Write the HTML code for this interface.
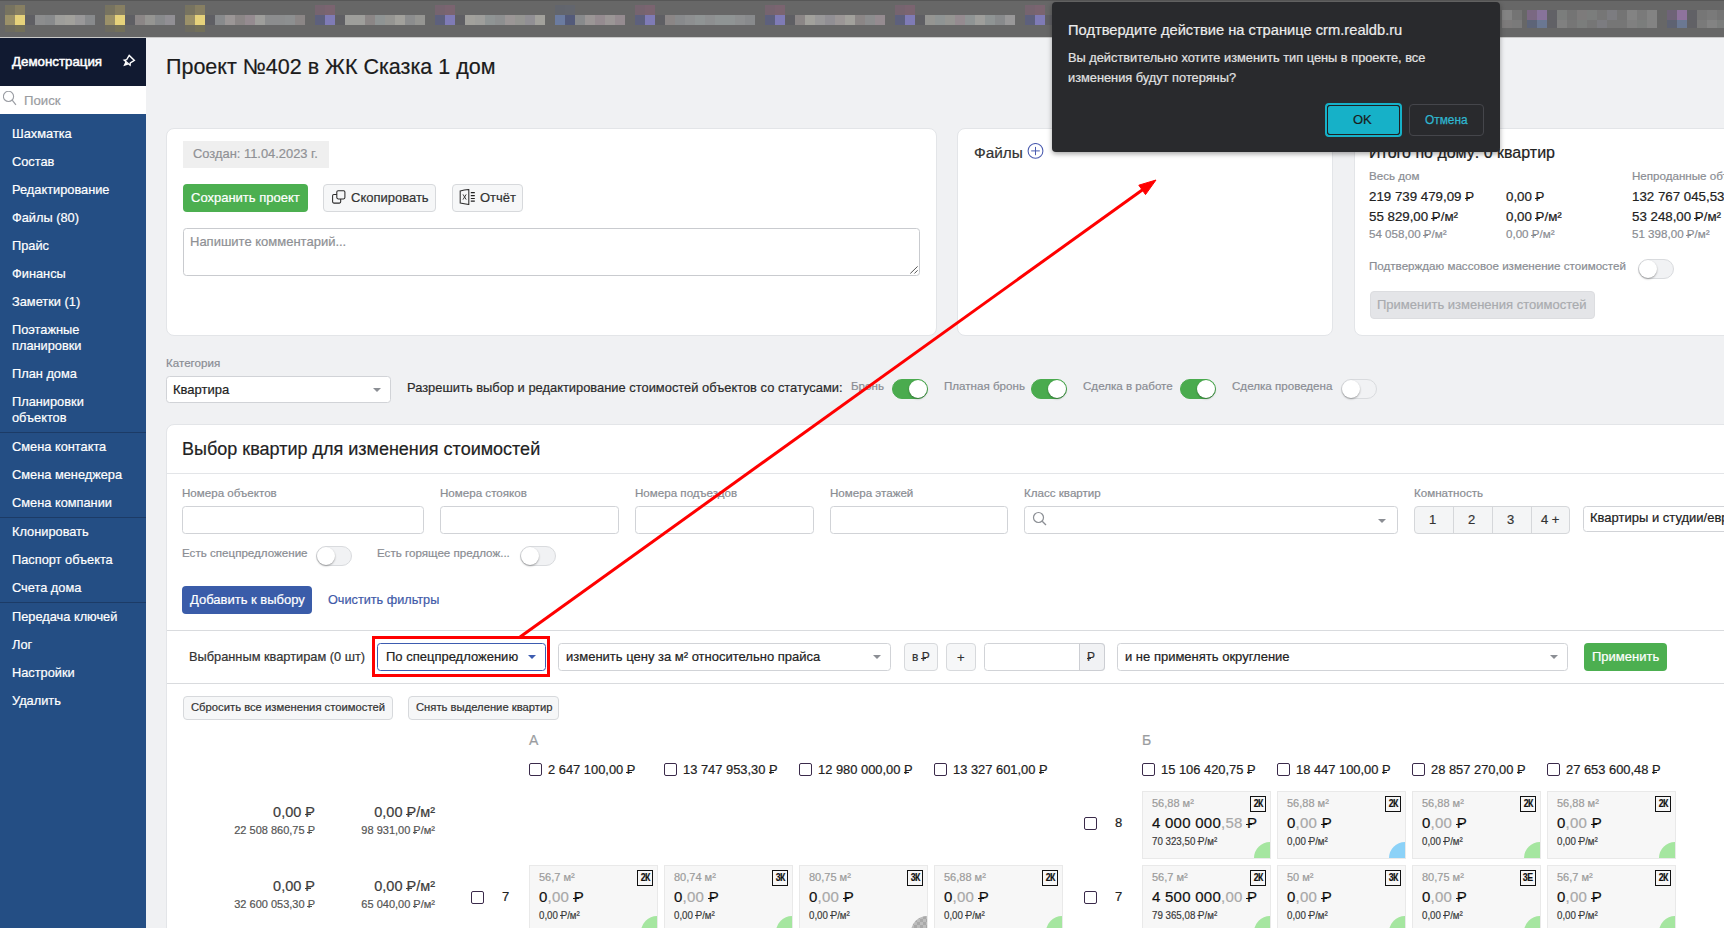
<!DOCTYPE html>
<html><head><meta charset="utf-8">
<style>
*{box-sizing:border-box;margin:0;padding:0}
html,body{width:1724px;height:928px;overflow:hidden;background:#f0f1f3;font-family:"Liberation Sans",sans-serif;color:#212121;position:relative;-webkit-text-stroke-width:0.2px}
.a{position:absolute;white-space:nowrap}
#topbar{position:absolute;left:0;top:0;width:1724px;height:38px;background:#676767;border-top:1px solid #575757;border-bottom:1px solid #c9c9c9;overflow:hidden}
#topbar i{position:absolute;display:block;height:10px}
#sb{position:absolute;left:0;top:38px;width:146px;height:890px;background:#244e84}
#sbh{position:absolute;left:0;top:0;width:146px;height:48px;background:#111a31;color:#fff;font-size:13.3px;-webkit-text-stroke-width:0.5px}
#sbs{position:absolute;left:0;top:48px;width:146px;height:28px;background:#fff}
.mi{position:absolute;left:12px;color:#fff;font-size:12.8px;line-height:16px;white-space:nowrap}
.sep{position:absolute;left:0;width:146px;height:1px;background:#1c3b66}
.card{position:absolute;background:#fff;border:1px solid #e3e5e8;border-radius:8px}
.lbl{position:absolute;font-size:11.6px;color:#8a8d93;white-space:nowrap}
.inp{position:absolute;background:#fff;border:1px solid #d1d3d7;border-radius:3.5px}
.tg{position:absolute;width:36px;height:20px;border-radius:10px;background:#f1f2f4;border:1px solid #d9dbde}
.tg:after{content:"";position:absolute;left:0;top:0;width:18px;height:18px;border-radius:50%;background:#fff;box-shadow:0 1px 2px rgba(0,0,0,.35)}
.tg.on{background:#4aab4e;border-color:#4aab4e}
.tg.on:after{left:16px}
.caret{position:absolute;width:0;height:0;border-left:4px solid transparent;border-right:4px solid transparent;border-top:4px solid #8b8e94}
.btn{position:absolute;border:1px solid #d7d9dc;background:#f6f7f8;border-radius:4px;font-size:13px;color:#333;white-space:nowrap}
.r{position:relative;display:inline-block;line-height:1}
.r:after{content:"";position:absolute;left:-0.04em;width:0.4em;top:0.6em;height:0.075em;background:currentColor}
.cb{position:absolute;width:13px;height:13px;border:1.3px solid #3a2a4a;border-radius:2px;background:#fff}
.fc{position:absolute;width:129px;height:68px;background:#f7f7f7;border:1px solid #e9e9e9;overflow:hidden}
.fc .ar{position:absolute;left:9px;top:4px;font-size:11px;line-height:14px;color:#9b9b9b;white-space:nowrap}
.fc .bd{position:absolute;left:107px;top:4px;width:16px;height:16px;border:1.5px solid #111;font-size:10px;line-height:13px;font-weight:bold;text-align:center;color:#111;letter-spacing:-0.5px}
.fc .bd span{display:inline-block;transform:scaleX(0.88)}
.fc .pr{position:absolute;left:9px;top:22px;font-size:15px;letter-spacing:0.25px;line-height:18px;color:#111;white-space:nowrap}
.fc .pr i{font-style:normal;color:#a8a8a8}
.fc .pm{position:absolute;left:9px;top:41.5px;font-size:11.6px;line-height:14px;color:#3a3a3a;white-space:nowrap;transform:scaleX(0.84);transform-origin:0 0}
.fc .q{position:absolute;right:-16px;bottom:-16px;width:32px;height:32px;border-radius:50%;background:#a5e6a0}
.fc .q.b{background:#8cd2f8}
.fc .q.g{background:repeating-conic-gradient(#bdbdbd 0 25%,#a9a9a9 0 50%) 0 0/6px 6px}
</style></head><body>
<div id="topbar"><i style="left:5px;top:4px;width:10px;height:10px;background:#777360"></i><i style="left:15px;top:4px;width:10px;height:10px;background:#877f62"></i><i style="left:5px;top:14px;width:10px;height:10px;background:#9b9169"></i><i style="left:15px;top:14px;width:10px;height:10px;background:#e6d27b"></i><i style="left:5px;top:24px;width:10px;height:7px;background:#6d6b5f"></i><i style="left:15px;top:24px;width:10px;height:7px;background:#737059"></i><i style="left:25px;top:14px;width:10px;height:10px;background:#5f5f64"></i><i style="left:105px;top:4px;width:10px;height:10px;background:#777360"></i><i style="left:115px;top:4px;width:10px;height:10px;background:#877f62"></i><i style="left:105px;top:14px;width:10px;height:10px;background:#9b9169"></i><i style="left:115px;top:14px;width:10px;height:10px;background:#e6d27b"></i><i style="left:105px;top:24px;width:10px;height:7px;background:#6d6b5f"></i><i style="left:115px;top:24px;width:10px;height:7px;background:#737059"></i><i style="left:125px;top:14px;width:10px;height:10px;background:#5f5f64"></i><i style="left:185px;top:4px;width:10px;height:10px;background:#777360"></i><i style="left:195px;top:4px;width:10px;height:10px;background:#877f62"></i><i style="left:185px;top:14px;width:10px;height:10px;background:#9b9169"></i><i style="left:195px;top:14px;width:10px;height:10px;background:#e6d27b"></i><i style="left:185px;top:24px;width:10px;height:7px;background:#6d6b5f"></i><i style="left:195px;top:24px;width:10px;height:7px;background:#737059"></i><i style="left:205px;top:14px;width:10px;height:10px;background:#5f5f64"></i><i style="left:315px;top:4px;width:10px;height:10px;background:#76646f"></i><i style="left:325px;top:4px;width:10px;height:10px;background:#7b6470"></i><i style="left:315px;top:14px;width:10px;height:10px;background:#5d607d"></i><i style="left:325px;top:14px;width:10px;height:10px;background:#7f7bb6"></i><i style="left:335px;top:14px;width:10px;height:10px;background:#5f5f64"></i><i style="left:435px;top:4px;width:10px;height:10px;background:#76646f"></i><i style="left:445px;top:4px;width:10px;height:10px;background:#7b6470"></i><i style="left:435px;top:14px;width:10px;height:10px;background:#5d607d"></i><i style="left:445px;top:14px;width:10px;height:10px;background:#7f7bb6"></i><i style="left:455px;top:14px;width:10px;height:10px;background:#5f5f64"></i><i style="left:635px;top:4px;width:10px;height:10px;background:#76646f"></i><i style="left:645px;top:4px;width:10px;height:10px;background:#7b6470"></i><i style="left:635px;top:14px;width:10px;height:10px;background:#5d607d"></i><i style="left:645px;top:14px;width:10px;height:10px;background:#7f7bb6"></i><i style="left:655px;top:14px;width:10px;height:10px;background:#5f5f64"></i><i style="left:765px;top:4px;width:10px;height:10px;background:#76646f"></i><i style="left:775px;top:4px;width:10px;height:10px;background:#7b6470"></i><i style="left:765px;top:14px;width:10px;height:10px;background:#5d607d"></i><i style="left:775px;top:14px;width:10px;height:10px;background:#7f7bb6"></i><i style="left:785px;top:14px;width:10px;height:10px;background:#5f5f64"></i><i style="left:895px;top:4px;width:10px;height:10px;background:#76646f"></i><i style="left:905px;top:4px;width:10px;height:10px;background:#7b6470"></i><i style="left:895px;top:14px;width:10px;height:10px;background:#5d607d"></i><i style="left:905px;top:14px;width:10px;height:10px;background:#7f7bb6"></i><i style="left:915px;top:14px;width:10px;height:10px;background:#5f5f64"></i><i style="left:1025px;top:4px;width:10px;height:10px;background:#76646f"></i><i style="left:1035px;top:4px;width:10px;height:10px;background:#7b6470"></i><i style="left:1025px;top:14px;width:10px;height:10px;background:#5d607d"></i><i style="left:1035px;top:14px;width:10px;height:10px;background:#7f7bb6"></i><i style="left:1045px;top:14px;width:10px;height:10px;background:#5f5f64"></i><i style="left:555px;top:4px;width:10px;height:10px;background:#62656d"></i><i style="left:565px;top:4px;width:10px;height:10px;background:#63666e"></i><i style="left:555px;top:14px;width:10px;height:10px;background:#6b7ba0"></i><i style="left:565px;top:14px;width:10px;height:10px;background:#535a7a"></i><i style="left:35px;top:14px;width:10px;height:10px;background:#8c8d8e"></i><i style="left:45px;top:14px;width:10px;height:10px;background:#888a8c"></i><i style="left:55px;top:14px;width:10px;height:10px;background:#9e9e9b"></i><i style="left:65px;top:14px;width:10px;height:10px;background:#a2a19c"></i><i style="left:75px;top:14px;width:10px;height:10px;background:#999899"></i><i style="left:85px;top:14px;width:10px;height:10px;background:#888a8c"></i><i style="left:135px;top:14px;width:10px;height:10px;background:#8b8686"></i><i style="left:145px;top:14px;width:10px;height:10px;background:#959592"></i><i style="left:155px;top:14px;width:10px;height:10px;background:#888a8c"></i><i style="left:165px;top:14px;width:10px;height:10px;background:#918f94"></i><i style="left:215px;top:14px;width:10px;height:10px;background:#888a8c"></i><i style="left:225px;top:14px;width:10px;height:10px;background:#9b9696"></i><i style="left:235px;top:14px;width:10px;height:10px;background:#8b8686"></i><i style="left:245px;top:14px;width:10px;height:10px;background:#958b90"></i><i style="left:255px;top:14px;width:10px;height:10px;background:#9e9e9b"></i><i style="left:265px;top:14px;width:10px;height:10px;background:#8c8d8e"></i><i style="left:275px;top:14px;width:10px;height:10px;background:#8c8d8e"></i><i style="left:285px;top:14px;width:10px;height:10px;background:#8d8f90"></i><i style="left:295px;top:14px;width:10px;height:10px;background:#8b8686"></i><i style="left:345px;top:14px;width:10px;height:10px;background:#9e9e9b"></i><i style="left:355px;top:14px;width:10px;height:10px;background:#9e9e9b"></i><i style="left:365px;top:14px;width:10px;height:10px;background:#8b8686"></i><i style="left:375px;top:14px;width:10px;height:10px;background:#8f9494"></i><i style="left:385px;top:14px;width:10px;height:10px;background:#959592"></i><i style="left:395px;top:14px;width:10px;height:10px;background:#a2a19c"></i><i style="left:405px;top:14px;width:10px;height:10px;background:#8c8d8e"></i><i style="left:415px;top:14px;width:10px;height:10px;background:#959592"></i><i style="left:465px;top:14px;width:10px;height:10px;background:#a2a19c"></i><i style="left:475px;top:14px;width:10px;height:10px;background:#9e9e9b"></i><i style="left:485px;top:14px;width:10px;height:10px;background:#8f9494"></i><i style="left:495px;top:14px;width:10px;height:10px;background:#8d8f90"></i><i style="left:505px;top:14px;width:10px;height:10px;background:#9b9696"></i><i style="left:515px;top:14px;width:10px;height:10px;background:#959592"></i><i style="left:525px;top:14px;width:10px;height:10px;background:#918f94"></i><i style="left:535px;top:14px;width:10px;height:10px;background:#a2a19c"></i><i style="left:575px;top:14px;width:10px;height:10px;background:#888a8c"></i><i style="left:585px;top:14px;width:10px;height:10px;background:#9b9696"></i><i style="left:595px;top:14px;width:10px;height:10px;background:#958b90"></i><i style="left:605px;top:14px;width:10px;height:10px;background:#9b9696"></i><i style="left:615px;top:14px;width:10px;height:10px;background:#958b90"></i><i style="left:665px;top:14px;width:10px;height:10px;background:#8b8686"></i><i style="left:675px;top:14px;width:10px;height:10px;background:#888a8c"></i><i style="left:685px;top:14px;width:10px;height:10px;background:#8d8f90"></i><i style="left:695px;top:14px;width:10px;height:10px;background:#8f9494"></i><i style="left:705px;top:14px;width:10px;height:10px;background:#8d8f90"></i><i style="left:715px;top:14px;width:10px;height:10px;background:#8f9494"></i><i style="left:725px;top:14px;width:10px;height:10px;background:#8f9494"></i><i style="left:735px;top:14px;width:10px;height:10px;background:#8d8f90"></i><i style="left:745px;top:14px;width:10px;height:10px;background:#888a8c"></i><i style="left:795px;top:14px;width:10px;height:10px;background:#8b8686"></i><i style="left:805px;top:14px;width:10px;height:10px;background:#a2a19c"></i><i style="left:815px;top:14px;width:10px;height:10px;background:#999899"></i><i style="left:825px;top:14px;width:10px;height:10px;background:#918f94"></i><i style="left:835px;top:14px;width:10px;height:10px;background:#9b9696"></i><i style="left:845px;top:14px;width:10px;height:10px;background:#a2a19c"></i><i style="left:855px;top:14px;width:10px;height:10px;background:#8b8686"></i><i style="left:865px;top:14px;width:10px;height:10px;background:#8c8d8e"></i><i style="left:875px;top:14px;width:10px;height:10px;background:#958b90"></i><i style="left:925px;top:14px;width:10px;height:10px;background:#959592"></i><i style="left:935px;top:14px;width:10px;height:10px;background:#8f9494"></i><i style="left:945px;top:14px;width:10px;height:10px;background:#959592"></i><i style="left:955px;top:14px;width:10px;height:10px;background:#958b90"></i><i style="left:965px;top:14px;width:10px;height:10px;background:#8f9494"></i><i style="left:975px;top:14px;width:10px;height:10px;background:#9e9e9b"></i><i style="left:985px;top:14px;width:10px;height:10px;background:#8f9494"></i><i style="left:995px;top:14px;width:10px;height:10px;background:#888a8c"></i><i style="left:1005px;top:14px;width:10px;height:10px;background:#999899"></i><i style="left:1502px;top:9px;width:10px;height:10px;background:#838383"></i><i style="left:1502px;top:19px;width:10px;height:8px;background:#7d7b7b"></i><i style="left:1512px;top:9px;width:10px;height:10px;background:#747474"></i><i style="left:1512px;top:19px;width:10px;height:8px;background:#7a7a7a"></i><i style="left:1527px;top:9px;width:10px;height:10px;background:#7a6882"></i><i style="left:1537px;top:9px;width:10px;height:10px;background:#87739b"></i><i style="left:1527px;top:19px;width:10px;height:8px;background:#5d6478"></i><i style="left:1537px;top:19px;width:10px;height:8px;background:#6a7792"></i><i style="left:1547px;top:9px;width:10px;height:18px;background:#616166"></i><i style="left:1557px;top:9px;width:10px;height:10px;background:#7b7d7c"></i><i style="left:1557px;top:19px;width:10px;height:8px;background:#808080"></i><i style="left:1567px;top:9px;width:10px;height:10px;background:#747474"></i><i style="left:1567px;top:19px;width:10px;height:8px;background:#767676"></i><i style="left:1577px;top:9px;width:10px;height:10px;background:#7d7b7b"></i><i style="left:1577px;top:19px;width:10px;height:8px;background:#7b7d7c"></i><i style="left:1587px;top:9px;width:10px;height:10px;background:#7b7d7c"></i><i style="left:1587px;top:19px;width:10px;height:8px;background:#767676"></i><i style="left:1597px;top:9px;width:10px;height:10px;background:#767676"></i><i style="left:1597px;top:19px;width:10px;height:8px;background:#7c7c80"></i><i style="left:1607px;top:9px;width:10px;height:10px;background:#7c7c80"></i><i style="left:1607px;top:19px;width:10px;height:8px;background:#767676"></i><i style="left:1617px;top:9px;width:10px;height:10px;background:#747474"></i><i style="left:1617px;top:19px;width:10px;height:8px;background:#767676"></i><i style="left:1627px;top:9px;width:10px;height:10px;background:#838383"></i><i style="left:1627px;top:19px;width:10px;height:8px;background:#808080"></i><i style="left:1637px;top:9px;width:10px;height:10px;background:#7a7a7a"></i><i style="left:1637px;top:19px;width:10px;height:8px;background:#7b7d7c"></i><i style="left:1647px;top:9px;width:10px;height:10px;background:#838383"></i><i style="left:1647px;top:19px;width:10px;height:8px;background:#838383"></i><i style="left:1667px;top:9px;width:10px;height:10px;background:#6e6377"></i><i style="left:1677px;top:9px;width:10px;height:10px;background:#8e739d"></i><i style="left:1667px;top:19px;width:10px;height:8px;background:#5e6272"></i><i style="left:1677px;top:19px;width:10px;height:8px;background:#6b7893"></i><i style="left:1687px;top:9px;width:10px;height:18px;background:#616166"></i><i style="left:1697px;top:9px;width:10px;height:10px;background:#767676"></i><i style="left:1697px;top:19px;width:10px;height:8px;background:#7a7a7a"></i><i style="left:1707px;top:9px;width:10px;height:10px;background:#7a7a7a"></i><i style="left:1707px;top:19px;width:10px;height:8px;background:#838383"></i><i style="left:1717px;top:9px;width:10px;height:10px;background:#747474"></i><i style="left:1717px;top:19px;width:10px;height:8px;background:#7b7d7c"></i></div>

<div id="sb">
  <div id="sbh"><div class="a" style="left:12px;top:16px;line-height:16px">Демонстрация</div>
    <svg class="a" style="left:118px;top:12px" width="22" height="22" viewBox="0 0 22 22"><path d="M6.2 10.1 L8.7 9.7 L11.2 5.4 L16.4 10.4 L12.3 12.9 L12.1 15.2 Z" fill="none" stroke="#fff" stroke-width="1.35" stroke-linejoin="miter"/><path d="M7.4 11.6 L10.6 14.4 L5.3 16.3 Z" fill="#fff"/></svg>
  </div>
  <div id="sbs">
    <svg class="a" style="left:3px;top:5px" width="16" height="16" viewBox="0 0 16 16"><circle cx="5.5" cy="5.4" r="5.1" fill="none" stroke="#9a9da3" stroke-width="1.1"/><path d="M9.2 9.1 L12.9 13.8" stroke="#9a9da3" stroke-width="1.2"/></svg>
    <div class="a" style="left:24px;top:7px;font-size:13.2px;line-height:16px;color:#9a9ca1">Поиск</div>
  </div>
  <div class="mi" style="top:88px">Шахматка</div>
  <div class="mi" style="top:116px">Состав</div>
  <div class="mi" style="top:144px">Редактирование</div>
  <div class="mi" style="top:172px">Файлы (80)</div>
  <div class="mi" style="top:200px">Прайс</div>
  <div class="mi" style="top:228px">Финансы</div>
  <div class="mi" style="top:256px">Заметки (1)</div>
  <div class="mi" style="top:284px">Поэтажные<br>планировки</div>
  <div class="mi" style="top:328px">План дома</div>
  <div class="mi" style="top:356px">Планировки<br>объектов</div>
  <div class="mi" style="top:401px">Смена контакта</div>
  <div class="mi" style="top:429px">Смена менеджера</div>
  <div class="mi" style="top:457px">Смена компании</div>
  <div class="mi" style="top:486px">Клонировать</div>
  <div class="mi" style="top:514px">Паспорт объекта</div>
  <div class="mi" style="top:542px">Счета дома</div>
  <div class="mi" style="top:571px">Передача ключей</div>
  <div class="mi" style="top:599px">Лог</div>
  <div class="mi" style="top:627px">Настройки</div>
  <div class="mi" style="top:655px">Удалить</div>
  <div class="sep" style="top:394px"></div>
  <div class="sep" style="top:479px"></div>
  <div class="sep" style="top:564px"></div>
</div>


<div id="title" class="a" style="left:166px;top:54px;font-size:21.5px;line-height:26px;color:#1b1b1b">Проект №402 в ЖК Сказка 1 дом</div>

<!-- card 1 -->
<div class="card" style="left:166px;top:128px;width:771px;height:208px"></div>
<div class="a" style="left:183px;top:141px;width:146px;height:27px;background:#efefef"></div>
<div id="created" class="a" style="left:193px;top:146px;font-size:12.9px;line-height:16px;color:#8f9195">Создан: 11.04.2023 г.</div>
<div class="a" style="left:183px;top:184px;width:125px;height:28px;background:#4caf50;border-radius:4px"></div>
<div id="save" class="a" style="left:191px;top:190px;font-size:13px;line-height:16px;color:#fff">Сохранить проект</div>
<div class="btn" style="left:323px;top:184px;width:113px;height:28px"></div>
<svg class="a" style="left:326px;top:186px" width="24" height="24" viewBox="0 0 24 24"><rect x="10.8" y="4.8" width="8.1" height="8.1" rx="1.3" fill="none" stroke="#2a2a2a" stroke-width="1.05"/><path d="M10.8 8.5 H7.9 Q6.6 8.5 6.6 9.8 V15.8 Q6.6 17.1 7.9 17.1 H13.4 Q14.7 17.1 14.7 15.8 V12.9" fill="none" stroke="#2a2a2a" stroke-width="1.05"/></svg>
<div id="copy" class="a" style="left:351px;top:190px;font-size:13px;line-height:16px;color:#333">Скопировать</div>
<div class="btn" style="left:452px;top:184px;width:71px;height:28px"></div>
<svg class="a" style="left:454px;top:184px" width="24" height="24" viewBox="0 0 24 24"><path d="M6.2 6.9 Q10 5.9 14.8 5.6 V20.4 Q10 20.1 6.2 19.1 Z" fill="none" stroke="#2a2a2a" stroke-width="1.05"/><path d="M9 10.4 L12.2 15.6 M12.2 10.4 L9 15.6" stroke="#333" stroke-width="0.95"/><path d="M16.8 8.6 H20.8 M16.8 11.6 H20.8 M16.8 14.5 H20.8 M16.8 17.2 H20.8" stroke="#222" stroke-width="1.2"/></svg>
<div id="rep" class="a" style="left:480px;top:190px;font-size:13px;line-height:16px;color:#333">Отчёт</div>
<div class="inp" style="left:183px;top:228px;width:737px;height:48px;border-color:#c9cbcf"></div>
<div id="comment" class="a" style="left:190px;top:234px;font-size:13px;line-height:16px;color:#8e9094">Напишите комментарий...</div>
<svg class="a" style="left:909px;top:264px" width="10" height="11" viewBox="0 0 10 11"><path d="M1.3 9.5 L8.6 2.4 M5.4 9.5 L8.6 6.3" stroke="#555" stroke-width="1"/></svg>

<!-- card 2 -->
<div class="card" style="left:957px;top:128px;width:376px;height:208px"></div>
<div id="files" class="a" style="left:974px;top:144px;font-size:15.4px;line-height:18px;color:#333">Файлы</div>
<svg class="a" style="left:1027px;top:143px" width="17" height="17" viewBox="0 0 17 17"><circle cx="8.5" cy="7.9" r="7.4" fill="none" stroke="#4b5cb0" stroke-width="1.05"/><path d="M8.5 3.9 V12.2 M4.2 7.9 H12.8" stroke="#4b5cb0" stroke-width="1"/></svg>

<!-- card 3 -->
<div class="card" style="left:1354px;top:128px;width:400px;height:208px"></div>
<div id="itogo" class="a" style="left:1369px;top:144px;font-size:16px;line-height:18px;color:#222">Итого по дому: 0 квартир</div>
<div class="lbl" style="left:1369px;top:169px;line-height:14px">Весь дом</div>
<div class="lbl" style="left:1632px;top:169px;line-height:14px">Непроданные объекты</div>
<div id="v1" class="a" style="left:1369px;top:189px;font-size:13.3px;line-height:16px">219 739 479,09 <span class="r">Р</span></div>
<div class="a" style="left:1506px;top:189px;font-size:13.3px;line-height:16px">0,00 <span class="r">Р</span></div>
<div class="a" style="left:1632px;top:189px;font-size:13.3px;line-height:16px">132 767 045,53 <span class="r">Р</span></div>
<div class="a" style="left:1369px;top:209px;font-size:13.3px;line-height:16px">55 829,00 <span class="r">Р</span>/м²</div>
<div class="a" style="left:1506px;top:209px;font-size:13.3px;line-height:16px">0,00 <span class="r">Р</span>/м²</div>
<div class="a" style="left:1632px;top:209px;font-size:13.3px;line-height:16px">53 248,00 <span class="r">Р</span>/м²</div>
<div class="lbl" style="left:1369px;top:227px;line-height:14px">54 058,00 <span class="r">Р</span>/м²</div>
<div class="lbl" style="left:1506px;top:227px;line-height:14px">0,00 <span class="r">Р</span>/м²</div>
<div class="lbl" style="left:1632px;top:227px;line-height:14px">51 398,00 <span class="r">Р</span>/м²</div>
<div id="confirm" class="lbl" style="left:1369px;top:259px;line-height:14px">Подтверждаю массовое изменение стоимостей</div>
<div class="tg" style="left:1638px;top:259px"></div>
<div class="a" style="left:1370px;top:291px;width:225px;height:28px;background:#e4e5e8;border:1px solid #dcdde0;border-radius:4px"></div>
<div id="applyall" class="a" style="left:1377px;top:297px;font-size:13px;line-height:16px;color:#a9abaf">Применить изменения стоимостей</div>

<!-- category row -->
<div class="lbl" style="left:166px;top:356px;line-height:14px">Категория</div>
<div class="inp" style="left:166px;top:376px;width:225px;height:27px"></div>
<div id="kv" class="a" style="left:173px;top:382px;font-size:13px;line-height:16px;color:#222">Квартира</div>
<div class="caret" style="left:373px;top:388px"></div>
<div id="razr" class="a" style="left:407px;top:380px;font-size:12.9px;line-height:16px;color:#2b2b2b">Разрешить выбор и редактирование стоимостей объектов со статусами:</div>
<div class="lbl" style="left:851px;top:379px;line-height:14px">Бронь</div>
<div class="tg on" style="left:892px;top:379px"></div>
<div class="lbl" style="left:944px;top:379px;line-height:14px">Платная бронь</div>
<div class="tg on" style="left:1031px;top:379px"></div>
<div class="lbl" style="left:1083px;top:379px;line-height:14px">Сделка в работе</div>
<div class="tg on" style="left:1180px;top:379px"></div>
<div class="lbl" style="left:1232px;top:379px;line-height:14px">Сделка проведена</div>
<div class="tg" style="left:1341px;top:379px"></div>

<!-- selection card -->
<div class="card" style="left:166px;top:424px;width:1600px;height:600px"></div>
<div id="vybor" class="a" style="left:182px;top:439px;font-size:18px;line-height:20px;color:#222">Выбор квартир для изменения стоимостей</div>
<div class="a" style="left:167px;top:473px;width:1557px;height:1px;background:#e3e5e8"></div>
<div class="lbl" style="left:182px;top:486px;line-height:14px">Номера объектов</div>
<div class="lbl" style="left:440px;top:486px;line-height:14px">Номера стояков</div>
<div class="lbl" style="left:635px;top:486px;line-height:14px">Номера подъездов</div>
<div class="lbl" style="left:830px;top:486px;line-height:14px">Номера этажей</div>
<div class="lbl" style="left:1024px;top:486px;line-height:14px">Класс квартир</div>
<div class="lbl" style="left:1414px;top:486px;line-height:14px">Комнатность</div>
<div class="inp" style="left:182px;top:506px;width:242px;height:28px"></div>
<div class="inp" style="left:440px;top:506px;width:179px;height:28px"></div>
<div class="inp" style="left:635px;top:506px;width:179px;height:28px"></div>
<div class="inp" style="left:830px;top:506px;width:178px;height:28px"></div>
<div class="inp" style="left:1024px;top:506px;width:374px;height:28px"></div>
<svg class="a" style="left:1032px;top:511px" width="16" height="16" viewBox="0 0 16 16"><circle cx="6.5" cy="6.5" r="5" fill="none" stroke="#8b8e94" stroke-width="1.2"/><path d="M10.2 10.2 L14 14" stroke="#8b8e94" stroke-width="1.3"/></svg>
<div class="caret" style="left:1378px;top:519px"></div>
<div class="a" style="left:1414px;top:506px;width:156px;height:28px;border:1px solid #d5d7da;border-radius:4px;background:#f4f5f6"></div>
<div class="a" style="left:1453px;top:507px;width:1px;height:26px;background:#d5d7da"></div>
<div class="a" style="left:1492px;top:507px;width:1px;height:26px;background:#d5d7da"></div>
<div class="a" style="left:1531px;top:507px;width:1px;height:26px;background:#d5d7da"></div>
<div class="a" style="left:1429px;top:512px;font-size:13px;line-height:16px;color:#333">1</div>
<div class="a" style="left:1468px;top:512px;font-size:13px;line-height:16px;color:#333">2</div>
<div class="a" style="left:1507px;top:512px;font-size:13px;line-height:16px;color:#333">3</div>
<div class="a" style="left:1541px;top:512px;font-size:13px;line-height:16px;color:#333">4 +</div>
<div class="inp" style="left:1583px;top:506px;width:200px;height:26px"></div>
<div class="a" style="left:1590px;top:510px;font-size:13px;line-height:16px;color:#222">Квартиры и студии/евро</div>
<div class="lbl" style="left:182px;top:546px;line-height:14px">Есть спецпредложение</div>
<div class="tg" style="left:316px;top:546px"></div>
<div class="lbl" style="left:377px;top:546px;line-height:14px">Есть горящее предлож...</div>
<div class="tg" style="left:520px;top:546px"></div>
<div class="a" style="left:182px;top:586px;width:130px;height:28px;background:#3a5ca9;border-radius:4px"></div>
<div id="add" class="a" style="left:190px;top:592px;font-size:13px;line-height:16px;color:#fff">Добавить к выбору</div>
<div id="clear" class="a" style="left:328px;top:592px;font-size:12.7px;line-height:16px;color:#3f5aa8">Очистить фильтры</div>

<!-- action bar -->
<div class="a" style="left:167px;top:630px;width:1557px;height:1px;background:#d9dbde"></div>
<div id="vybr" class="a" style="left:189px;top:649px;font-size:12.8px;line-height:16px;color:#333">Выбранным квартирам (0 шт)</div>
<div class="inp" style="left:377px;top:643px;width:169px;height:28px;border-color:#3d5cb0"></div>
<div id="spec" class="a" style="left:386px;top:649px;font-size:13px;line-height:16px;color:#222">По спецпредложению</div>
<div class="caret" style="left:528px;top:655px;border-top-color:#3d5cb0"></div>
<div class="inp" style="left:558px;top:643px;width:333px;height:28px"></div>
<div id="izm" class="a" style="left:566px;top:649px;font-size:13px;line-height:16px;color:#222">изменить цену за м² относительно прайса</div>
<div class="caret" style="left:873px;top:655px"></div>
<div class="btn" style="left:904px;top:643px;width:34px;height:28px"></div>
<div class="a" style="left:912px;top:649px;font-size:12px;line-height:16px;color:#333">в <span class="r">Р</span></div>
<div class="btn" style="left:946px;top:643px;width:30px;height:28px"></div>
<div class="a" style="left:957px;top:650px;font-size:13px;line-height:16px;color:#333">+</div>
<div class="inp" style="left:984px;top:643px;width:121px;height:28px"></div>
<div class="a" style="left:1079px;top:643px;width:26px;height:28px;background:#f1f2f4;border:1px solid #ccced3;border-radius:0 4px 4px 0"></div>
<div class="a" style="left:1087px;top:649px;font-size:12px;line-height:16px;color:#333"><span class="r">Р</span></div>
<div class="inp" style="left:1117px;top:643px;width:451px;height:28px"></div>
<div id="okr" class="a" style="left:1125px;top:649px;font-size:13px;line-height:16px;color:#222">и не применять округление</div>
<div class="caret" style="left:1550px;top:655px"></div>
<div class="a" style="left:1584px;top:643px;width:83px;height:28px;background:#4caf50;border-radius:4px"></div>
<div id="apply" class="a" style="left:1592px;top:649px;font-size:13px;line-height:16px;color:#fff">Применить</div>
<div class="a" style="left:167px;top:683px;width:1557px;height:1px;background:#d9dbde"></div>
<div class="btn" style="left:183px;top:696px;width:210px;height:24px"></div>
<div id="sbros" class="a" style="left:191px;top:700px;font-size:11.25px;line-height:14px;color:#333">Сбросить все изменения стоимостей</div>
<div class="btn" style="left:408px;top:696px;width:151px;height:24px"></div>
<div id="snyat" class="a" style="left:416px;top:700px;font-size:11.25px;line-height:14px;color:#333">Снять выделение квартир</div>

<!-- chess -->
<div class="a" style="left:529px;top:731px;font-size:14px;line-height:18px;color:#9a9ca0">А</div>
<div class="a" style="left:1142px;top:731px;font-size:14px;line-height:18px;color:#9a9ca0">Б</div>
<div class="cb" style="left:529px;top:763px"></div><div class="a" style="left:548px;top:762px;font-size:12.9px;line-height:16px;color:#222">2 647 100,00 <span class="r">Р</span></div>
<div class="cb" style="left:664px;top:763px"></div><div class="a" style="left:683px;top:762px;font-size:12.9px;line-height:16px;color:#222">13 747 953,30 <span class="r">Р</span></div>
<div class="cb" style="left:799px;top:763px"></div><div class="a" style="left:818px;top:762px;font-size:12.9px;line-height:16px;color:#222">12 980 000,00 <span class="r">Р</span></div>
<div class="cb" style="left:934px;top:763px"></div><div class="a" style="left:953px;top:762px;font-size:12.9px;line-height:16px;color:#222">13 327 601,00 <span class="r">Р</span></div>
<div class="cb" style="left:1142px;top:763px"></div><div class="a" style="left:1161px;top:762px;font-size:12.9px;line-height:16px;color:#222">15 106 420,75 <span class="r">Р</span></div>
<div class="cb" style="left:1277px;top:763px"></div><div class="a" style="left:1296px;top:762px;font-size:12.9px;line-height:16px;color:#222">18 447 100,00 <span class="r">Р</span></div>
<div class="cb" style="left:1412px;top:763px"></div><div class="a" style="left:1431px;top:762px;font-size:12.9px;line-height:16px;color:#222">28 857 270,00 <span class="r">Р</span></div>
<div class="cb" style="left:1547px;top:763px"></div><div class="a" style="left:1566px;top:762px;font-size:12.9px;line-height:16px;color:#222">27 653 600,48 <span class="r">Р</span></div>
<div class="a" style="right:1409px;top:803px;font-size:14.5px;line-height:18px;color:#3d3d3d">0,00 <span class="r">Р</span></div>
<div class="a" style="right:1409px;top:823px;font-size:11px;line-height:14px;color:#555">22 508 860,75 <span class="r">Р</span></div>
<div class="a" style="right:1409px;top:877px;font-size:14.5px;line-height:18px;color:#3d3d3d">0,00 <span class="r">Р</span></div>
<div class="a" style="right:1409px;top:897px;font-size:11px;line-height:14px;color:#555">32 600 053,30 <span class="r">Р</span></div>
<div class="a" style="right:1289px;top:803px;font-size:14.5px;line-height:18px;color:#3d3d3d">0,00 <span class="r">Р</span>/м²</div>
<div class="a" style="right:1289px;top:823px;font-size:11px;line-height:14px;color:#555">98 931,00 <span class="r">Р</span>/м²</div>
<div class="a" style="right:1289px;top:877px;font-size:14.5px;line-height:18px;color:#3d3d3d">0,00 <span class="r">Р</span>/м²</div>
<div class="a" style="right:1289px;top:897px;font-size:11px;line-height:14px;color:#555">65 040,00 <span class="r">Р</span>/м²</div>
<div class="cb" style="left:471px;top:891px"></div><div class="a" style="left:502px;top:889px;font-size:13px;line-height:16px;color:#222">7</div>
<div class="cb" style="left:1084px;top:817px"></div><div class="a" style="left:1115px;top:815px;font-size:13px;line-height:16px;color:#222">8</div>
<div class="cb" style="left:1084px;top:891px"></div><div class="a" style="left:1115px;top:889px;font-size:13px;line-height:16px;color:#222">7</div>
<div class="fc" style="left:529px;top:865px"><div class="ar">56,7 м²</div><div class="bd"><span>2К</span></div><div class="pr">0<i>,00</i> <span class="r">Р</span></div><div class="pm">0,00 <span class="r">Р</span>/м²</div><div class="q "></div></div>
<div class="fc" style="left:664px;top:865px"><div class="ar">80,74 м²</div><div class="bd"><span>3К</span></div><div class="pr">0<i>,00</i> <span class="r">Р</span></div><div class="pm">0,00 <span class="r">Р</span>/м²</div><div class="q "></div></div>
<div class="fc" style="left:799px;top:865px"><div class="ar">80,75 м²</div><div class="bd"><span>3К</span></div><div class="pr">0<i>,00</i> <span class="r">Р</span></div><div class="pm">0,00 <span class="r">Р</span>/м²</div><div class="q g"></div></div>
<div class="fc" style="left:934px;top:865px"><div class="ar">56,88 м²</div><div class="bd"><span>2К</span></div><div class="pr">0<i>,00</i> <span class="r">Р</span></div><div class="pm">0,00 <span class="r">Р</span>/м²</div><div class="q "></div></div>
<div class="fc" style="left:1142px;top:791px"><div class="ar">56,88 м²</div><div class="bd"><span>2К</span></div><div class="pr">4 000 000<i>,58</i> <span class="r">Р</span></div><div class="pm">70 323,50 <span class="r">Р</span>/м²</div><div class="q "></div></div>
<div class="fc" style="left:1277px;top:791px"><div class="ar">56,88 м²</div><div class="bd"><span>2К</span></div><div class="pr">0<i>,00</i> <span class="r">Р</span></div><div class="pm">0,00 <span class="r">Р</span>/м²</div><div class="q b"></div></div>
<div class="fc" style="left:1412px;top:791px"><div class="ar">56,88 м²</div><div class="bd"><span>2К</span></div><div class="pr">0<i>,00</i> <span class="r">Р</span></div><div class="pm">0,00 <span class="r">Р</span>/м²</div><div class="q "></div></div>
<div class="fc" style="left:1547px;top:791px"><div class="ar">56,88 м²</div><div class="bd"><span>2К</span></div><div class="pr">0<i>,00</i> <span class="r">Р</span></div><div class="pm">0,00 <span class="r">Р</span>/м²</div><div class="q "></div></div>
<div class="fc" style="left:1142px;top:865px"><div class="ar">56,7 м²</div><div class="bd"><span>2К</span></div><div class="pr">4 500 000<i>,00</i> <span class="r">Р</span></div><div class="pm">79 365,08 <span class="r">Р</span>/м²</div><div class="q "></div></div>
<div class="fc" style="left:1277px;top:865px"><div class="ar">50 м²</div><div class="bd"><span>3К</span></div><div class="pr">0<i>,00</i> <span class="r">Р</span></div><div class="pm">0,00 <span class="r">Р</span>/м²</div><div class="q "></div></div>
<div class="fc" style="left:1412px;top:865px"><div class="ar">80,75 м²</div><div class="bd"><span>3Е</span></div><div class="pr">0<i>,00</i> <span class="r">Р</span></div><div class="pm">0,00 <span class="r">Р</span>/м²</div><div class="q "></div></div>
<div class="fc" style="left:1547px;top:865px"><div class="ar">56,7 м²</div><div class="bd"><span>2К</span></div><div class="pr">0<i>,00</i> <span class="r">Р</span></div><div class="pm">0,00 <span class="r">Р</span>/м²</div><div class="q "></div></div>

<!-- red annotation -->
<div class="a" style="left:372px;top:636px;width:178px;height:41px;border:3px solid #ff0000"></div>
<svg class="a" style="left:0;top:0" width="1724" height="928" viewBox="0 0 1724 928"><path d="M520 637 L1145 188" stroke="#ff0000" stroke-width="3" fill="none"/><path d="M1156 180 L1138.8 185.2 L1145.5 194.6 Z" fill="#ff0000" stroke="#ff0000" stroke-width="1" stroke-linejoin="miter"/></svg>

<!-- modal -->
<div class="a" style="left:1052px;top:2px;width:448px;height:150px;background:#292a2d;border-radius:4px;box-shadow:0 2px 5px rgba(0,0,0,.35)"></div>
<div id="mt" class="a" style="left:1068px;top:21px;font-size:14.7px;line-height:18px;color:#ececec">Подтвердите действие на странице crm.realdb.ru</div>
<div id="mb1" class="a" style="left:1068px;top:50px;font-size:12.8px;line-height:16px;color:#e2e2e2">Вы действительно хотите изменить тип цены в проекте, все</div>
<div id="mb2" class="a" style="left:1068px;top:70px;font-size:12.8px;line-height:16px;color:#e2e2e2">изменения будут потеряны?</div>
<div class="a" style="left:1325px;top:103px;width:77px;height:34px;border:2px solid #16b1c8;border-radius:4px;background:#16b1c8;box-shadow:inset 0 0 0 1px #1f2023"></div>
<div class="a" style="left:1327px;top:105px;width:73px;height:30px;border:1px solid #1f2023;border-radius:3px"></div>
<div id="ok" class="a" style="left:1353px;top:112px;font-size:13px;line-height:16px;color:#1b1b1b">OK</div>
<div class="a" style="left:1409px;top:104px;width:75px;height:32px;border:1px solid #45464b;border-radius:4px"></div>
<div id="cancel" class="a" style="left:1425px;top:112px;font-size:11.9px;line-height:16px;color:#2fb6cf;-webkit-text-stroke:0.25px #2fb6cf">Отмена</div>

</body></html>
